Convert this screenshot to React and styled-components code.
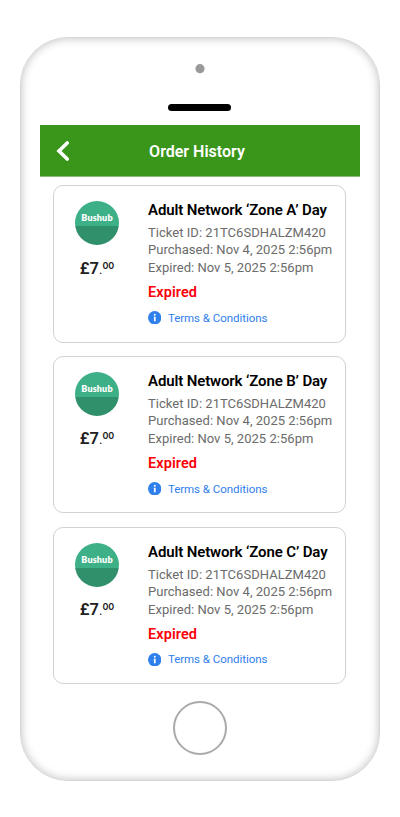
import React from "react";
import styled, { createGlobalStyle } from "styled-components";

const GlobalStyle = createGlobalStyle`
    * {
        box-sizing: border-box;
    }
    body {
        margin: 0;
        background: #fff;
        font-family: Roboto, sans-serif;
    }
`;

const Page = styled.div`
    display: flex;
    justify-content: center;
    height: 817px;
    padding-top: 37px;
`;

const Phone = styled.div`
    display: flex;
    flex-direction: column;
    align-items: center;
    width: 360px;
    height: 743.5px;
    border: 1px solid #d6d6d6;
    border-radius: 48px;
    box-shadow: inset 0 0 10px rgba(0, 0, 0, 0.25);
`;

const Camera = styled.svg`
    width: 10px;
    height: 10px;
    margin-top: 26px;
`;

const Speaker = styled.div`
    width: 63px;
    height: 7px;
    margin: 30px 1px 0 0;
    border-radius: 4px;
    background: #000;
`;

const Screen = styled.div`
    width: 320px;
    height: 565px;
    margin-top: 14px;
`;

const Header = styled.header`
    display: flex;
    align-items: center;
    height: 51.5px;
    padding: 1px 16px 0;
    background: #3a961a;
    border-bottom: 1px solid #8bbb79;
`;

const BackIcon = styled.svg`
    width: 14px;
    height: 20px;
`;

const HeaderTitle = styled.h1`
    flex: 1;
    margin: 1px 20px 0 0;
    color: #fff;
    font-size: 16px;
    font-weight: 600;
    text-align: center;
`;

const Orders = styled.main`
    display: flex;
    flex-direction: column;
    gap: 13.3px;
    padding: 8.5px 14px 0 13px;
`;

const Card = styled.article`
    display: flex;
    height: 157.5px;
    padding: 15.3px 0 0 21px;
    border: 1px solid #d2d2d2;
    border-radius: 10px;
    background: #fff;
`;

const Operator = styled.div`
    display: flex;
    flex-direction: column;
    align-items: center;
    width: 44px;
`;

const Logo = styled.div`
    width: 44px;
    height: 44px;
    padding-top: 11px;
    border-radius: 50%;
    background: linear-gradient(#3db087 57%, #30906c 57%);
    color: #fff;
    font-family: Lato, sans-serif;
    font-size: 9px;
    font-weight: 800;
    line-height: 12px;
    letter-spacing: 0.15px;
    text-align: center;
`;

const Price = styled.div`
    display: flex;
    margin-top: 13.3px;
    color: #212121;
    font-size: 16.5px;
    font-weight: 600;
    line-height: 20px;
    white-space: nowrap;
`;

const Point = styled.span`
    font-size: 13px;
    font-weight: 400;
    line-height: 22px;
`;

const Pence = styled.span`
    font-family: Inter, sans-serif;
    font-size: 9px;
    font-weight: 600;
    line-height: 14px;
`;

const Details = styled.div`
    margin-left: 29px;
    white-space: nowrap;
`;

const TicketName = styled.h2`
    margin: 0 0 3.7px;
    color: #000;
    font-size: 15px;
    font-weight: 600;
    line-height: 19px;
    letter-spacing: -0.13px;
`;

const Line = styled.div`
    color: #6b6b6b;
    font-size: 13px;
    line-height: 17.5px;
    letter-spacing: 0.03px;
`;

const Status = styled.div`
    margin-top: 8px;
    color: #fb0007;
    font-size: 14.5px;
    font-weight: 600;
    line-height: 18px;
    letter-spacing: 0.08px;
`;

const Terms = styled.a`
    display: flex;
    align-items: center;
    gap: 6.5px;
    margin-top: 7.3px;
    color: #2f80ed;
    font-size: 11.5px;
    line-height: 16px;
    letter-spacing: -0.04px;
`;

const InfoIcon = styled.svg`
    width: 13.4px;
    height: 13.4px;
`;

const HomeButton = styled.div`
    width: 54px;
    height: 54px;
    margin-top: 10.5px;
    border: 2px solid #aaa;
    border-radius: 50%;
`;

const tickets = ["A", "B", "C"];

function TicketCard({ zone }) {
    return (
        <Card>
            <Operator>
                <Logo>Bushub</Logo>
                <Price>
                    £7<Point>.</Point><Pence>00</Pence>
                </Price>
            </Operator>
            <Details>
                <TicketName>Adult Network ‘Zone {zone}’ Day</TicketName>
                <Line>Ticket ID: 21TC6SDHALZM420</Line>
                <Line>Purchased: Nov 4, 2025 2:56pm</Line>
                <Line>Expired: Nov 5, 2025 2:56pm</Line>
                <Status>Expired</Status>
                <Terms>
                    <InfoIcon viewBox="0 0 14 14">
                        <circle cx="7" cy="7" r="7" fill="#2f80ed" />
                        <circle cx="7.1" cy="4" r="1" fill="#fff" />
                        <path d="M6 5.9H8V10.6H6.2V6.8H6Z" fill="#fff" />
                    </InfoIcon>
                    Terms &amp; Conditions
                </Terms>
            </Details>
        </Card>
    );
}

function App() {
    return (
        <>
            <GlobalStyle />
            <Page>
                <Phone>
                    <Camera viewBox="0 0 10 10">
                        <circle cx="5" cy="4.7" r="4.6" fill="#999" />
                    </Camera>
                    <Speaker />
                    <Screen>
                        <Header>
                            <BackIcon viewBox="0 0 14 20">
                                <path
                                    d="M11.2 2L3 10L11.2 18"
                                    fill="none"
                                    stroke="#fff"
                                    strokeWidth="3.6"
                                    strokeLinecap="round"
                                />
                            </BackIcon>
                            <HeaderTitle>Order History</HeaderTitle>
                        </Header>
                        <Orders>
                            {tickets.map((zone) => (
                                <TicketCard key={zone} zone={zone} />
                            ))}
                        </Orders>
                    </Screen>
                    <HomeButton />
                </Phone>
            </Page>
        </>
    );
}

export default App;
